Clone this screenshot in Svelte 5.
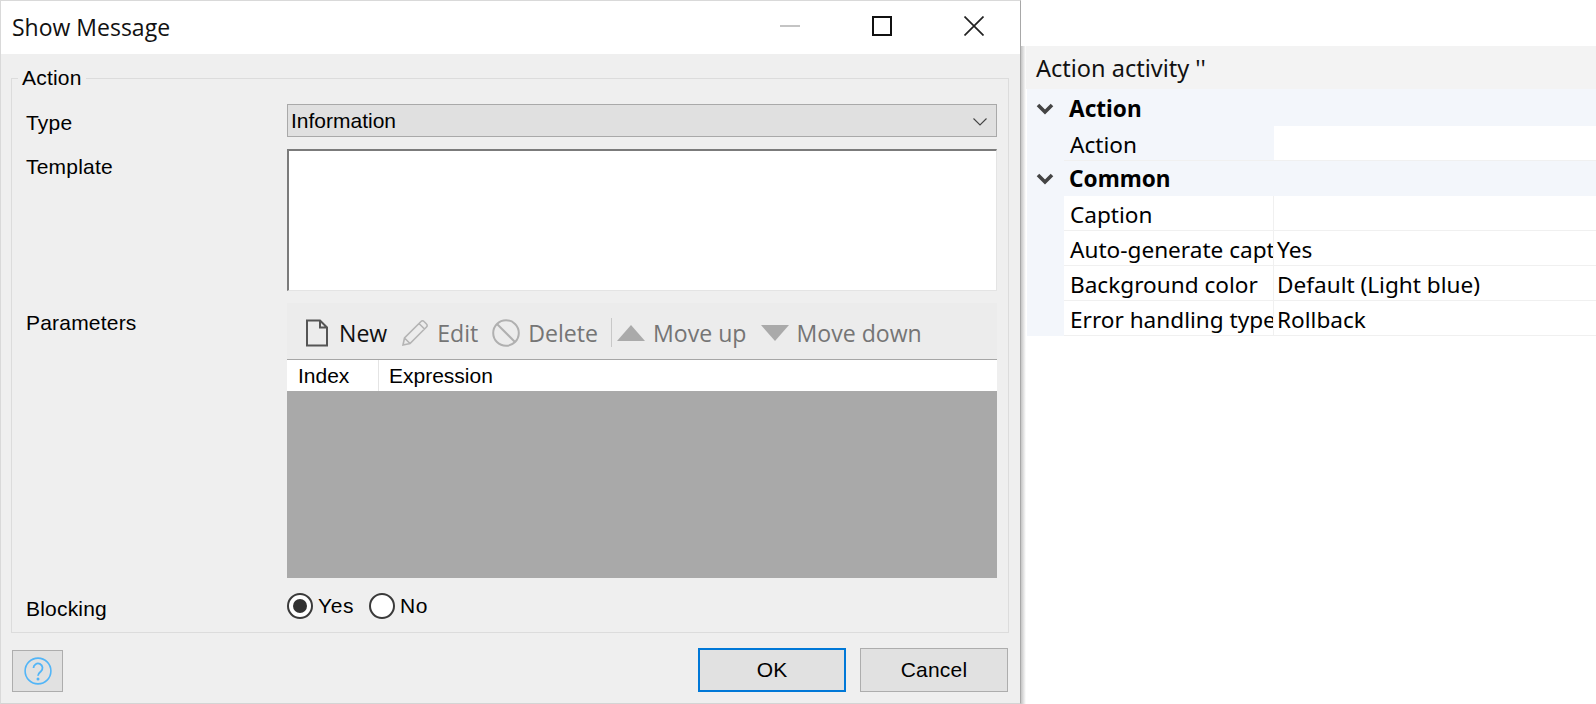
<script lang="ts">
  const toolbar = [
    { label: "New", icon: "file", off: false },
    { label: "Edit", icon: "pencil", off: true },
    { label: "Delete", icon: "ban", off: true },
    { label: "Move up", icon: "up", off: true, sep: true },
    { label: "Move down", icon: "down", off: true },
  ];

  const common = [
    { name: "Caption", value: "" },
    { name: "Auto-generate caption", value: "Yes" },
    { name: "Background color", value: "Default (Light blue)" },
    { name: "Error handling type", value: "Rollback" },
  ];
</script>

{#snippet chevron()}
  <svg class="chev" width="18" height="12" viewBox="0 0 18 12">
    <path d="M2 2 9 9l7-7" fill="none" stroke="#444" stroke-width="3.600" />
  </svg>
{/snippet}

<div class="page">
  <section class="dialog">
    <header class="titlebar">
      <span class="title">Show Message</span>
      <div class="winbtns">
        <svg width="20" height="20" viewBox="0 0 20 20"><path d="M0 10h20" stroke="#c4c4c4" stroke-width="2" /></svg>
        <svg width="20" height="20" viewBox="0 0 20 20"><rect x="1" y="1" width="18" height="18" fill="none" stroke="#111" stroke-width="2" /></svg>
        <svg width="20" height="20" viewBox="0 0 20 20"><path d="M.5.5l19 19M19.500.5l-19 19" stroke="#222" stroke-width="1.700" /></svg>
      </div>
    </header>

    <div class="body">
      <fieldset>
        <legend>Action</legend>
        <div class="form">
          <span class="label type">Type</span>
          <div class="select">
            <span>Information</span>
            <svg width="14" height="8" viewBox="0 0 14 8"><path d="M.5.5 7 7l6.500-6.500" fill="none" stroke="#444" stroke-width="1.100" /></svg>
          </div>

          <span class="label template">Template</span>
          <div class="textarea"></div>

          <span class="label params">Parameters</span>
          <div class="params-box">
            <div class="toolbar">
              {#each toolbar as item}
                {#if item.sep}<span class="sep"></span>{/if}
                <span class="tool" class:off={item.off}>
                  {#if item.icon === "file"}
                    <svg width="24" height="28" viewBox="0 0 24 28"><path d="M2 1.500h13l7 7v18H2zM15 1.500v7h7" fill="none" stroke="#555" stroke-width="2" /></svg>
                  {:else if item.icon === "pencil"}
                    <svg width="28" height="28" viewBox="0 0 28 28"><path d="M2 26l1.500-7L20 2.500a2 2 0 0 1 3 0l2.500 2.500a2 2 0 0 1 0 3L9 24.500zM3.500 19 9 24.500M18 4.500l5.500 5.500" fill="none" stroke="#b4b4b4" stroke-width="1.600" /></svg>
                  {:else if item.icon === "ban"}
                    <svg width="28" height="28" viewBox="0 0 28 28"><circle cx="14" cy="14" r="12.800" fill="none" stroke="#b0b0b0" stroke-width="2" /><path d="M5 5l18 18" stroke="#b0b0b0" stroke-width="2" /></svg>
                  {:else if item.icon === "up"}
                    <svg width="28" height="16" viewBox="0 0 28 16"><path d="M14 0 28 16H0z" fill="#aaa" /></svg>
                  {:else}
                    <svg width="28" height="16" viewBox="0 0 28 16"><path d="M0 0h28L14 16z" fill="#aaa" /></svg>
                  {/if}
                  <span>{item.label}</span>
                </span>
              {/each}
            </div>
            <div class="thead">
              <span class="col-index">Index</span>
              <span class="col-expr">Expression</span>
            </div>
            <div class="tbody"></div>
          </div>

          <span class="label blocking">Blocking</span>
          <div class="radios">
            <span class="radio on"></span><span class="rlabel">Yes</span>
            <span class="radio"></span><span class="rlabel">No</span>
          </div>
        </div>
      </fieldset>

      <footer class="footer">
        <button type="button" class="btn help" aria-label="Help">
          <svg width="28" height="28" viewBox="0 0 28 28">
            <circle cx="14" cy="14" r="12.900" fill="none" stroke="#52b5f7" stroke-width="1.600" />
            <path d="M9.500 11a4.500 4.500 0 1 1 7.300 3.500c-1.700 1.300-2.800 2-2.800 4.200" fill="none" stroke="#52b5f7" stroke-width="1.800" />
            <circle cx="14" cy="22" r="1.500" fill="#52b5f7" />
          </svg>
        </button>
        <span class="spacer"></span>
        <button type="button" class="btn ok">OK</button>
        <button type="button" class="btn">Cancel</button>
      </footer>
    </div>
  </section>

  <aside class="panel">
    <div class="panel-top"></div>
    <div class="panel-title">Action activity ''</div>
    <div class="grid">
      <div class="group">{@render chevron()}<b>Action</b></div>
      <div class="row plain">
        <span class="name">Action</span>
        <span class="val"></span>
      </div>
      <div class="group">{@render chevron()}<b>Common</b></div>
      {#each common as row}
        <div class="row">
          <span class="name">{row.name}</span>
          <span class="val">{row.value}</span>
        </div>
      {/each}
    </div>
  </aside>
</div>

<style>
  :global(body) {
    margin: 0;
    background: #fff;
  }

  .page {
    display: flex;
    width: 1596px;
    height: 704px;
    overflow: hidden;
    font-family: "Liberation Sans", Arial, sans-serif;
    color: #000;
  }

  .dialog {
    width: 1021px;
    height: 704px;
    box-sizing: border-box;
    flex: none;
    display: flex;
    flex-direction: column;
    border-top: 1px solid #d9d9d9;
    border-left: 1px solid #d9d9d9;
    border-bottom: 1px solid #d4d4d4;
    border-right: 1px solid #a8a8a8;
  }

  .titlebar {
    height: 53px;
    flex: none;
    background: #fff;
    display: flex;
    align-items: center;
    justify-content: space-between;
    padding-left: 11px;
  }

  .title {
    font-family: "Open Sans", sans-serif;
    font-size: 23px;
    color: #111;
    margin-top: -2px;
  }

  .winbtns {
    display: flex;
    gap: 72px;
    padding-right: 36px;
    align-items: center;
    margin-top: -3px;
  }

  .body {
    flex: 1;
    background: #efefef;
    padding: 10px 11px 0 10px;
    display: flex;
    flex-direction: column;
  }

  fieldset {
    margin: 0;
    padding: 12px 11px 14px 14px;
    border: 1px solid #dcdcdc;
    min-width: 0;
  }

  legend {
    margin-left: -8px;
    padding: 0 4px;
    font-size: 21px;
    line-height: 28px;
    letter-spacing: 0.2px;
  }

  .form {
    display: grid;
    grid-template-columns: 261px 710px;
    row-gap: 12px;
  }

  .label {
    font-size: 21px;
    letter-spacing: 0.2px;
    line-height: 24px;
  }

  .type { padding-top: 7px; }
  .template { padding-top: 6px; }
  .params { padding-top: 8px; }
  .blocking {
    padding-top: 9px;
    line-height: 19px;
  }

  .select {
    height: 33px;
    box-sizing: border-box;
    background: #e0e0e0;
    border: 1px solid #a9a9a9;
    display: flex;
    align-items: center;
    justify-content: space-between;
    padding: 0 9px 0 3px;
    font-size: 21px;
  }

  .select svg { margin-top: 2px; }

  .textarea {
    height: 142px;
    box-sizing: border-box;
    background: #fff;
    border-top: 2px solid #7b7b7b;
    border-left: 2px solid #7b7b7b;
    border-right: 1px solid #e4e4e4;
    border-bottom: 1px solid #e4e4e4;
  }

  .params-box {
    height: 275px;
    display: flex;
    flex-direction: column;
  }

  .toolbar {
    height: 56px;
    flex: none;
    box-sizing: border-box;
    background: #ececec;
    display: flex;
    align-items: center;
    padding: 3px 0 0 18px;
    font-family: "Open Sans", sans-serif;
    font-size: 23.100px;
  }

  .tool {
    display: inline-flex;
    align-items: center;
    gap: 8px;
    margin-right: 14px;
    color: #111;
  }

  .tool:first-child { gap: 10px; }

  .tool.off { color: #757575; }

  .sep {
    width: 1px;
    height: 29px;
    background: #c8c8c8;
    margin: 0 5px 0 -1px;
  }

  .thead {
    height: 32px;
    flex: none;
    box-sizing: border-box;
    background: #fff;
    border-top: 1px solid #a6a6a6;
    display: flex;
    align-items: center;
    font-size: 21px;
  }

  .col-index {
    width: 92px;
    box-sizing: border-box;
    padding-left: 11px;
    line-height: 31px;
    border-right: 1px solid #e4e4e4;
  }

  .col-expr { padding-left: 10px; }

  .tbody {
    flex: 1;
    background: #a9a9a9;
  }

  .radios {
    height: 25px;
    margin-top: 3px;
    display: flex;
    align-items: center;
    font-size: 21px;
  }

  .radio {
    width: 26px;
    height: 26px;
    box-sizing: border-box;
    border: 2px solid #3a3a3a;
    border-radius: 50%;
    background: #fff;
    flex: none;
    position: relative;
  }

  .radio.on::after {
    content: "";
    position: absolute;
    inset: 4px;
    border-radius: 50%;
    background: #333;
  }

  .rlabel {
    margin: 0 15px 0 5px;
    letter-spacing: 0.6px;
  }

  .footer {
    display: flex;
    align-items: flex-end;
    gap: 14px;
    height: 44px;
    padding-top: 15px;
    padding-right: 1px;
  }

  .spacer { flex: 1; }

  .btn {
    width: 148px;
    height: 44px;
    box-sizing: border-box;
    padding: 0;
    background: #e1e1e1;
    border: 1px solid #adadad;
    font: 21px "Liberation Sans", Arial, sans-serif;
    letter-spacing: 0.2px;
    color: #000;
    border-radius: 0;
  }

  .btn.ok {
    border: 2px solid #0078d7;
  }

  .btn.help {
    width: 51px;
    height: 42px;
    margin-left: 1px;
    display: flex;
    align-items: center;
    justify-content: center;
  }

  .panel {
    flex: 1;
    min-width: 0;
    box-sizing: border-box;
    display: flex;
    flex-direction: column;
    font-family: "Noto Sans", sans-serif;
    font-size: 22.600px;
    position: relative;
  }

  .panel::before {
    content: "";
    position: absolute;
    left: 0;
    top: 46px;
    bottom: 0;
    width: 5px;
    background: linear-gradient(to right, #c4c4c4, #fff);
  }

  .panel-top {
    height: 46px;
  }

  .panel-title {
    height: 43px;
    background: #f3f3f3;
    padding-left: 15px;
    line-height: 44px;
    font-size: 23.500px;
    color: #111;
  }

  .grid {
    margin-left: 6px;
    padding-top: 2px;
    background: #f3f6fb;
  }

  .group {
    height: 35px;
    display: flex;
    align-items: center;
    padding-left: 9px;
    box-sizing: border-box;
  }

  .chev { margin-right: 15px; }

  .group b { font-weight: 700; }

  .row {
    height: 35px;
    box-sizing: border-box;
    display: flex;
    margin-left: 37px;
    background: #fff;
    border-bottom: 1px solid #f0f0f0;
    line-height: 38px;
  }

  .name {
    width: 210px;
    flex: none;
    box-sizing: border-box;
    padding-left: 6px;
    border-right: 1px solid #f0f0f0;
    white-space: nowrap;
    overflow: hidden;
  }

  .val {
    flex: 1;
    padding-left: 3px;
    background: #fff;
  }

  .row.plain {
    background: #f3f6fb;
  }

  .row.plain .name { border-right: 0; }
</style>
